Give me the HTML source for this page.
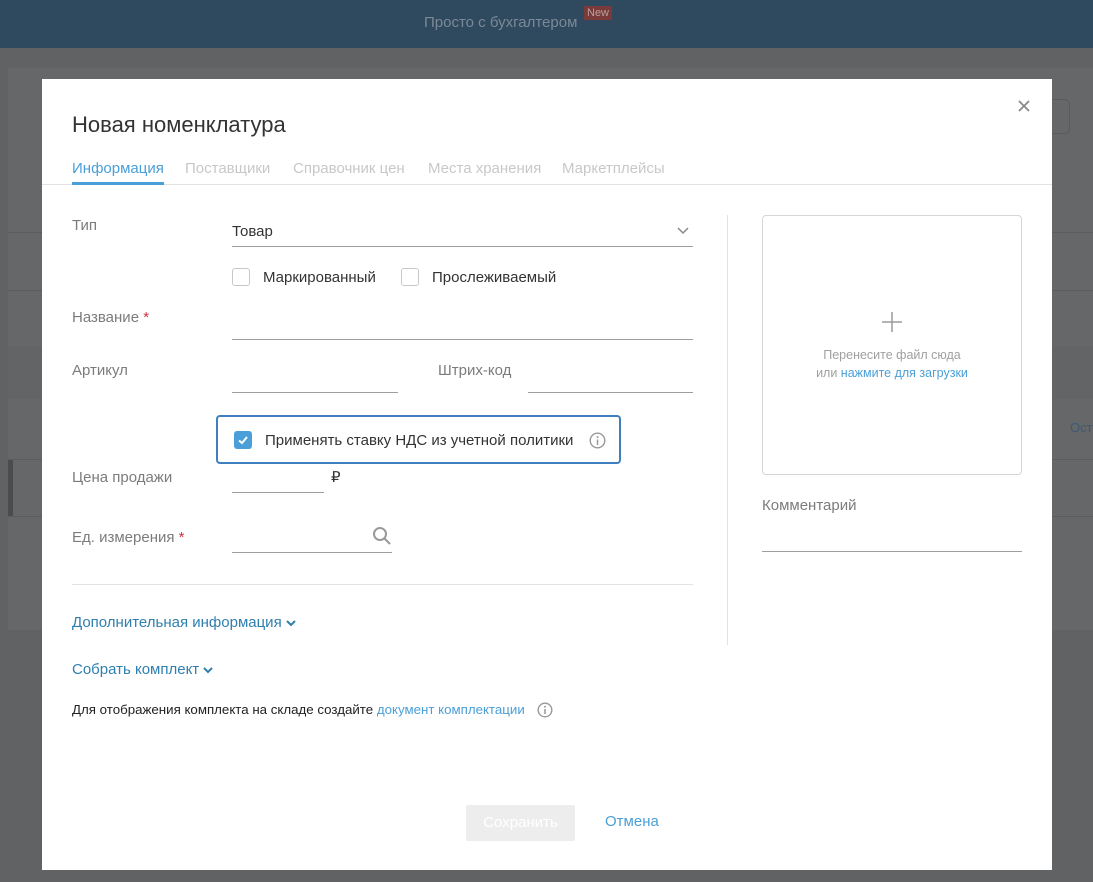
<!DOCTYPE html>
<html><head><meta charset="utf-8"><style>
*{box-sizing:border-box;margin:0;padding:0}
body{width:1093px;height:882px;overflow:hidden;background:#616264;font-family:"Liberation Sans",sans-serif;position:relative}
.hdr{position:absolute;left:0;top:0;width:1093px;height:48px;background:#2f495f}
.hdr .t{position:absolute;left:424px;top:14px;color:#7b8996;font-size:15px}
.hdr .n{position:absolute;left:584px;top:6px;background:#7a3a3a;color:#b9a0a0;font-size:11px;padding:1px 3px}
.bgp{position:absolute;left:8px;top:68px;width:1085px;height:562px;background:#666769}
.bl{position:absolute;left:8px;width:1085px;height:1px;background:#5b5c5e}
.modal{position:absolute;left:42px;top:79px;width:1010px;height:791px;background:#fff}
.a{position:absolute;white-space:nowrap}
.lbl{color:#7c7c7c;font-size:15px}
.line{position:absolute;height:1px;background:#9e9e9e}
.cb{position:absolute;width:18px;height:18px;border:1px solid #c8c8c8;border-radius:3px;background:#fff}
</style></head><body>
<div class="hdr"><span class="t">Просто с бухгалтером</span><span class="n">New</span></div>
<div class="bgp"></div>
<div class="bl" style="top:232px"></div><div class="bl" style="top:290px"></div>
<div style="position:absolute;left:8px;top:347px;width:1085px;height:52px;background:#636466"></div>
<div class="bl" style="top:459px"></div><div class="bl" style="top:516px"></div>
<div style="position:absolute;left:8px;top:460px;width:5px;height:56px;background:#4b4c4e"></div>
<div style="position:absolute;left:1052px;top:99px;width:18px;height:35px;border:1px solid #5a5b5d;border-left:none;border-radius:0 5px 5px 0"></div>
<div style="position:absolute;left:1070px;top:420px;color:#3d5a73;font-size:13px">Ост</div>
<div class="modal">
 <div class="a" style="left:30px;top:33px;font-size:22px;color:#333">Новая номенклатура</div>
 <svg class="a" style="left:975px;top:20px" width="14" height="14"><path d="M2 2L12 12M12 2L2 12" stroke="#888" stroke-width="1.8"/></svg>
 <div class="a" style="left:30px;top:81px;font-size:15px;color:#4a9fd8">Информация</div>
 <div class="a" style="left:0;top:105px;width:1010px;height:1px;background:#e2e2e2"></div>
 <div class="a" style="left:30px;top:103px;width:92px;height:3px;background:#4a9fd8"></div>
 <div class="a" style="left:143px;top:81px;font-size:15px;color:#c8c8c8">Поставщики</div>
 <div class="a" style="left:251px;top:81px;font-size:15px;color:#c8c8c8">Справочник цен</div>
 <div class="a" style="left:386px;top:81px;font-size:15px;color:#c8c8c8">Места хранения</div>
 <div class="a" style="left:520px;top:81px;font-size:15px;color:#c8c8c8">Маркетплейсы</div>

 <div class="a lbl" style="left:30px;top:138px">Тип</div>
 <div class="a" style="left:190px;top:144px;font-size:15px;color:#333">Товар</div>
 <svg class="a" style="left:635px;top:148px" width="12" height="8"><path d="M1 1L6 6L11 1" stroke="#888" stroke-width="1.5" fill="none"/></svg>
 <div class="line" style="left:190px;top:167px;width:461px"></div>
 <div class="cb" style="left:190px;top:189px"></div>
 <div class="a" style="left:221px;top:190px;font-size:15px;color:#333">Маркированный</div>
 <div class="cb" style="left:359px;top:189px"></div>
 <div class="a" style="left:390px;top:190px;font-size:15px;color:#333">Прослеживаемый</div>

 <div class="a lbl" style="left:30px;top:230px">Название <span style="color:#d0323c">*</span></div>
 <div class="line" style="left:190px;top:260px;width:461px"></div>
 <div class="a lbl" style="left:30px;top:283px">Артикул</div>
 <div class="line" style="left:190px;top:313px;width:166px"></div>
 <div class="a lbl" style="left:396px;top:283px">Штрих-код</div>
 <div class="line" style="left:486px;top:313px;width:165px"></div>

 <div class="a" style="left:174px;top:336px;width:405px;height:49px;border:2.5px solid #3f7fbf;border-radius:4px"></div>
 <div class="a" style="left:192px;top:352px;width:18px;height:18px;background:#4a9fd8;border-radius:3px"></div>
 <svg class="a" style="left:192px;top:352px" width="18" height="18"><path d="M5 9.5L8 12L13 6" stroke="#fff" stroke-width="2" fill="none"/></svg>
 <div class="a" style="left:223px;top:353px;font-size:15px;color:#333">Применять ставку НДС из учетной политики</div>
 <svg class="a" style="left:547px;top:353px" width="17" height="17"><circle cx="8.5" cy="8.5" r="7.3" stroke="#999" stroke-width="1.4" fill="none"/><circle cx="8.5" cy="5" r="1" fill="#999"/><path d="M8.5 7.5V13" stroke="#999" stroke-width="1.5"/></svg>

 <div class="a lbl" style="left:30px;top:390px">Цена продажи</div>
 <div class="line" style="left:190px;top:413px;width:92px"></div>
 <div class="a" style="left:289px;top:389px;font-size:15px;color:#333">₽</div>
 <div class="a lbl" style="left:30px;top:450px">Ед. измерения <span style="color:#d0323c">*</span></div>
 <svg class="a" style="left:330px;top:447px" width="20" height="20"><circle cx="8" cy="8" r="6" stroke="#999" stroke-width="2" fill="none"/><path d="M12.5 12.5L18 18" stroke="#999" stroke-width="2"/></svg>
 <div class="line" style="left:190px;top:473px;width:160px"></div>
 <div class="a" style="left:30px;top:505px;width:621px;height:1px;background:#e2e2e2"></div>

 <div class="a" style="left:30px;top:535px;font-size:15px;color:#2f7fb0">Дополнительная информация <svg width="10" height="7"><path d="M1 1L5 5L9 1" stroke="#2f7fb0" stroke-width="2" fill="none"/></svg></div>
 <div class="a" style="left:30px;top:582px;font-size:15px;color:#2f7fb0">Собрать комплект <svg width="10" height="7"><path d="M1 1L5 5L9 1" stroke="#2f7fb0" stroke-width="2" fill="none"/></svg></div>
 <div class="a" style="left:30px;top:623px;font-size:13.3px;color:#222">Для отображения комплекта на складе создайте <span style="color:#4a9fd8">документ комплектации</span></div>
 <svg class="a" style="left:495px;top:623px" width="16" height="16"><circle cx="8" cy="8" r="6.8" stroke="#999" stroke-width="1.4" fill="none"/><circle cx="8" cy="4.8" r="1" fill="#999"/><path d="M8 7V12" stroke="#999" stroke-width="1.5"/></svg>

 <div class="a" style="left:685px;top:136px;width:1px;height:430px;background:#e2e2e2"></div>
 <div class="a" style="left:720px;top:136px;width:260px;height:260px;border:1px solid #d6d6d6;border-radius:4px"></div>
 <svg class="a" style="left:840px;top:233px" width="20" height="20"><path d="M10 0V20M0 10H20" stroke="#9a9a9a" stroke-width="1.5"/></svg>
 <div class="a" style="left:720px;top:269px;width:260px;text-align:center;font-size:12.5px;color:#a0a0a0">Перенесите файл сюда</div>
 <div class="a" style="left:720px;top:287px;width:260px;text-align:center;font-size:12.5px;color:#a0a0a0">или <span style="color:#4a9fd8">нажмите для загрузки</span></div>
 <div class="a lbl" style="left:720px;top:418px">Комментарий</div>
 <div class="line" style="left:720px;top:472px;width:260px"></div>

 <div class="a" style="left:424px;top:726px;width:109px;height:36px;background:#ededed;border-radius:2px;color:#fff;font-size:15px;text-align:center;line-height:36px">Сохранить</div>
 <div class="a" style="left:563px;top:734px;font-size:15px;color:#4a9fd8">Отмена</div>
</div>
</body></html>
